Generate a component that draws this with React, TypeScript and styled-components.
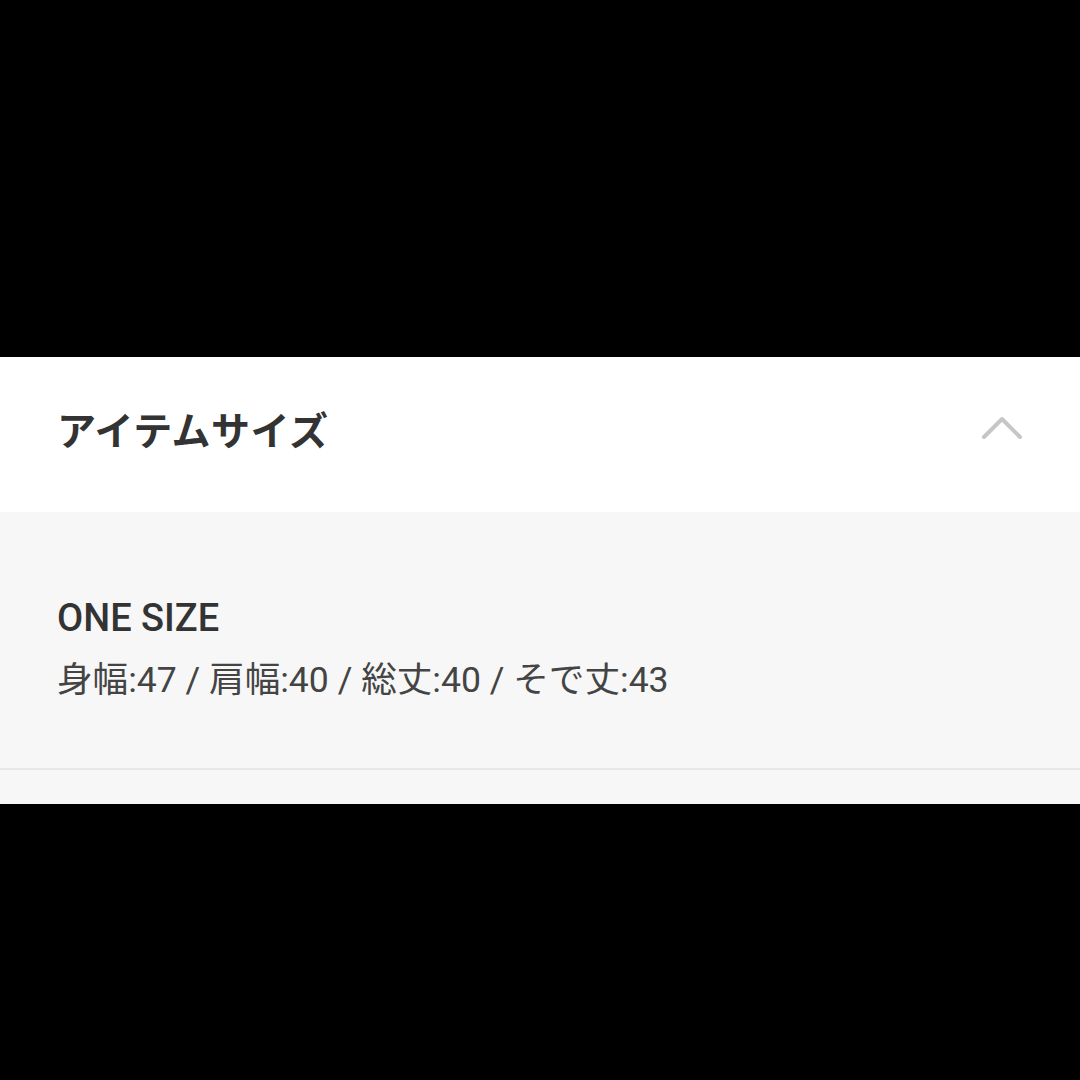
import styled, { createGlobalStyle } from "styled-components";

const GlobalStyle = createGlobalStyle`
    html, body {
        margin: 0;
        padding: 0;
        background: #000000;
    }
    body {
        font-family: "Noto Sans CJK JP", "Noto Sans", sans-serif;
    }
`

const sizes = [
    { label: "身幅", value: 47 },
    { label: "肩幅", value: 40 },
    { label: "総丈", value: 40 },
    { label: "そで丈", value: 43 },
]

export default function App() {
    return (
        <Page>
            <GlobalStyle />
            <Blank $height={357} />
            <Section>
                <Header>
                    <Title>アイテムサイズ</Title>
                    <Chevron width="42" height="24" viewBox="0 0 42 24">
                        <polyline points="3,21 21,3 39,21" />
                    </Chevron>
                </Header>
                <Body>
                    <SizeName>ONE SIZE</SizeName>
                    <SizeDetail>
                        {sizes.map((s) => `${s.label}:${s.value}`).join(" / ")}
                    </SizeDetail>
                </Body>
                <NextRow />
            </Section>
            <Blank $height={274} />
        </Page>
    )
}

const Page = styled.div`
    width: 1080px;
    height: 1080px;
    display: flex;
    flex-direction: column;
    background: #000000;
    overflow: hidden;
`

const Blank = styled.div<{ $height: number }>`
    height: ${(p) => p.$height}px;
    flex-shrink: 0;
`

const Section = styled.div`
    display: flex;
    flex-direction: column;
    background: #f7f7f7;
`

const Header = styled.div`
    height: 155px;
    background: #ffffff;
    display: flex;
    align-items: center;
    justify-content: space-between;
    padding: 0 57px 14px 57px;
    box-sizing: border-box;
`

const Title = styled.h2`
    margin: 0;
    font-family: "Noto Sans CJK JP", sans-serif;
    font-weight: 700;
    font-size: 39px;
    color: #333333;
    letter-spacing: 0.5px;
`

const Chevron = styled.svg`
    fill: none;
    stroke: #c6c6c6;
    stroke-width: 4;
    stroke-linecap: round;
    stroke-linejoin: round;
`

const Body = styled.div`
    height: 258px;
    box-sizing: border-box;
    padding: 83px 57px 0;
    border-bottom: 2px solid #e8e8e8;
    display: flex;
    flex-direction: column;
    gap: 16px;
`

const SizeName = styled.div`
    font-family: Roboto, "Noto Sans CJK JP", sans-serif;
    font-weight: 500;
    font-size: 38px;
    line-height: 46px;
    color: #333333;
`

const SizeDetail = styled.div`
    font-family: Roboto, "Noto Sans CJK JP", sans-serif;
    font-weight: 400;
    font-size: 35.6px;
    line-height: 46px;
    color: #444444;
`

const NextRow = styled.div`
    height: 34px;
    background: #f7f7f7;
`
